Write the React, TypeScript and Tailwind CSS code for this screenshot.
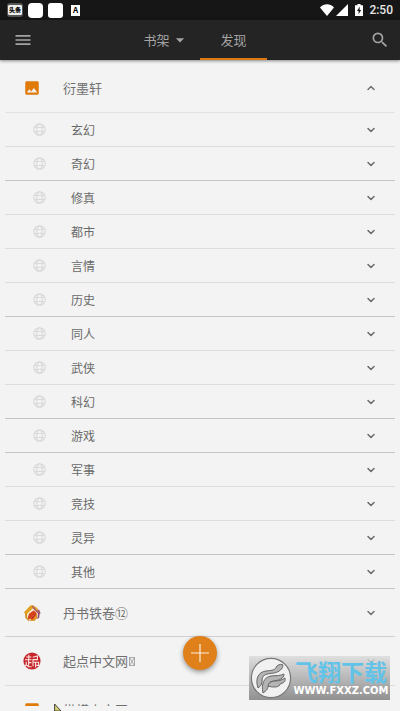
import React from 'react';
import { ChevronDown, ChevronUp } from 'lucide-react';
import { MdImage, MdMenu, MdSearch, MdArrowDropDown } from 'react-icons/md';

// `strong` marks the rows with the darker lower divider
const categories = [
  { name: '玄幻', strong: false },
  { name: '奇幻', strong: true },
  { name: '修真', strong: false },
  { name: '都市', strong: false },
  { name: '言情', strong: false },
  { name: '历史', strong: true },
  { name: '同人', strong: false },
  { name: '武侠', strong: false },
  { name: '科幻', strong: true },
  { name: '游戏', strong: true },
  { name: '军事', strong: false },
  { name: '竞技', strong: false },
  { name: '灵异', strong: true },
  { name: '其他', strong: true },
];

const Globe = () => (
  <svg className="size-[13px] shrink-0" viewBox="0 0 13 13" fill="none" stroke="#dadada" strokeWidth="1.2">
    <circle cx="6.5" cy="6.5" r="5.7" />
    <ellipse cx="6.5" cy="6.5" rx="2.7" ry="5.7" />
    <path d="M1.2 4.5h10.6M1.2 8.5h10.6" />
  </svg>
);

const HouseIcon = () => (
  <svg className="size-[18px]" viewBox="0 0 18 18">
    <path d="M3.4 8.4 9 3.6l5.6 4.8v5.4L11.4 17H6.2l-2.8-2.6z" fill="#f8ecc9" />
    <path d="M.8 8.6 7.6 1.2h2.2l1.6 1.6-6.8 6.4-1.4 1.2z" fill="#dfa01f" />
    <path d="m9.8 1.2 6.8 5.4 1 3-1.8.8-6.6-6.6z" fill="#a65a6e" />
    <path d="m10 2.6 2.8.2 2.6 3.4-1.2.6z" fill="#e0a02a" />
    <path d="M2 9.6h2v4l2.6 2.6-.8 1L2.4 14z" fill="#d08e1e" />
    <path d="M4.8 13.4 6 9.8l4.4-3.4 2.8 1.8-5 6.4-2.6.8z" fill="#d8431d" />
    <path d="M6.6 16.8 8.6 14l5-5.4.8 5.4-3 3z" fill="#e39426" />
    <path d="m8 14.4 4.6-5.6.8 1.4L9 16z" fill="#c0301c" />
    <path d="m15 9 1.6.8-.4 4-1.8 1.4z" fill="#8e4a72" />
  </svg>
);

const SealIcon = () => (
  <svg className="size-[18px]" viewBox="0 0 18 18">
    <circle cx="9" cy="9" r="8.6" fill="#c4282d" />
    <g fill="none" stroke="#fbe4e1" strokeWidth="1.1">
      <path d="M3.2 5h5.2M5.8 2.8v5M2 7.8h6.6M5.6 7.8v6M5.6 10.6h2.8M3.2 9.8v3.2l-1 1M3.4 13l2.4 1.8h2.8" />
      <path d="M9.8 5.2 14.4 4v3.6H10v6.6M10 10.2h5.6v3.2h-2.2M12.6 10.2v5.2" />
    </g>
  </svg>
);

const PictureIcon = () => <MdImage className="size-[18px] text-[#e07a08]" />;

const Tofu = () => (
  <svg className="ml-px h-[9px] w-[6px]" viewBox="0 0 6 9" fill="none" stroke="#8a8a8a" strokeWidth=".7">
    <path d="M.5.5h5v8h-5zM.5.5l5 8M5.5.5l-5 8" />
  </svg>
);

const StatusBar = () => (
  <div className="flex h-5 shrink-0 items-center bg-[#161616] px-[7px] text-white">
    <span className="flex h-[14px] w-4 items-center justify-center rounded-[3px] border border-y-2 border-[#555] bg-[#efefef] text-[6px] leading-none font-black text-black">头条</span>
    <span className="ml-[5px] size-[15px] rounded-[4px] bg-white" />
    <span className="ml-[5px] size-[15px] rounded-[3px] bg-white" />
    <span className="ml-2 flex h-[11px] w-[9px] items-center justify-center bg-white text-[8px] leading-none font-bold text-black">A</span>
    <div className="ml-auto flex items-center">
      {/* wifi, cell signal, charging battery */}
      <svg className="h-3 w-[14px]" viewBox="0 0 14 12" fill="#fff">
        <path d="M0 3.4C4-.8 10-.8 14 3.4L7 12z" />
      </svg>
      <svg className="ml-0.5 h-3 w-[12px]" viewBox="0 0 12 12" fill="#fff">
        <path d="M12 0v12H0z" />
      </svg>
      <svg className="ml-[7px] h-3 w-2" viewBox="0 0 8 12">
        <path d="M2.4 0h3.2v1.2H8V12H0V1.2h2.4z" fill="#fff" />
        <path d="M4.8 2.6 2 7h1.6v3.2L6.2 6H4.6z" fill="#161616" />
      </svg>
      <span className="ml-[6px] font-['Roboto',sans-serif] text-[12px] leading-none font-medium text-[#e6e6e6]">2:50</span>
    </div>
  </div>
);

const Toolbar = () => (
  <header className="relative z-10 flex h-10 shrink-0 items-center justify-between bg-[#242424] text-[#a3a3a3] shadow-[0_1px_3px_rgba(0,0,0,0.45)]">
    <button type="button" aria-label="菜单" className="w-10 pl-[13px]">
      <MdMenu className="size-5" />
    </button>
    <nav className="flex h-full text-[13px]">
      <button type="button" className="flex w-[67px] items-center justify-center">
        书架
        <MdArrowDropDown className="size-5" />
      </button>
      <button type="button" className="w-[67px] border-b-2 border-[#d9790f] pt-0.5">发现</button>
    </nav>
    <button type="button" aria-label="搜索" className="flex w-10 justify-end pr-[10px]">
      <MdSearch className="size-5" />
    </button>
  </header>
);

interface SourceProps {
  icon: React.ReactNode;
  title: React.ReactNode;
  open?: boolean;
  className: string;
}

const Source: React.FC<SourceProps> = ({ icon, title, open, className }) => (
  <button type="button" aria-expanded={!!open} className={`flex w-full shrink-0 items-center border-b pr-[18px] pl-[18px] text-[13px] text-[#707070] ${className}`}>
    {icon}
    <span className="ml-[22px] flex items-center">{title}</span>
    {open ? <ChevronUp className="ml-auto size-3" strokeWidth={3} /> : <ChevronDown className="ml-auto size-3" strokeWidth={3} />}
  </button>
);

const Watermark = () => (
  <div className="absolute right-[10px] bottom-[11px] flex h-11 w-[141px] items-center bg-linear-to-b from-[#dadada]/80 to-[#8c8c8c]/95">
    <svg className="ml-px size-[42px] shrink-0" viewBox="0 0 42 42">
      <circle cx="21" cy="21" r="19.6" fill="#f1f1f1" stroke="#777" strokeWidth="1.2" />
      <g fill="#b4b4b4" stroke="#666" strokeWidth="1">
        <path d="M8 31C5 22 8 15 16 14c7-.6 9-1 11-5 2-2 5-2 6-1 0 4-4 7-9 8-9 1-12 2-12 8 0 3-1 5-4 7z" />
        <path d="M13 36c-2-9 1-16 8-17 6-.6 9 0 13-2 0 5-5 6-10 7-5 .6-5 2-6 6 0 2-2 4-5 6z" />
        <path d="M18 29c1-4 4-5 8-5 4-.4 6-1 9-3 1 4-2 5-5 6 0 3-6 4-12 2z" />
      </g>
    </svg>
    <div className="flex flex-1 flex-col items-center">
      <span className="text-[23px] leading-6 font-bold text-[#62c3e8]">飞翔下载</span>
      <span className="mt-0.5 font-['DejaVu_Sans',sans-serif] text-[10px] leading-3 font-bold text-white">WWW.FXXZ.COM</span>
    </div>
  </div>
);

export default function App() {
  return (
    <div className="relative flex h-screen flex-col overflow-hidden bg-[#f3f3f3] pb-[5px] font-['Noto_Sans_CJK_SC',sans-serif]">
      <StatusBar />
      <Toolbar />
      <main className="flex min-h-0 flex-1 flex-col overflow-hidden px-[5px]">
        <Source className="h-[53px] border-[#e2e2e2] pt-1" icon={<PictureIcon />} title="衍墨轩" open />
        {categories.map((category) => (
          <button
            key={category.name}
            type="button"
            className={`flex h-[34px] w-full shrink-0 items-center border-b pr-[18px] pl-7 text-[12px] text-[#6a6a6a] ${category.strong ? 'border-[#c4c4c4]' : 'border-[#dddddd]'}`}
          >
            <Globe />
            <span className="ml-[25px]">{category.name}</span>
            <ChevronDown className="ml-auto size-3" strokeWidth={3} />
          </button>
        ))}
        <Source className="h-12 border-[#d0d0d0]" icon={<HouseIcon />} title="丹书铁卷⑫" />
        <Source className="h-[49px] border-[#dedede]" icon={<SealIcon />} title={<>起点中文网<Tofu /></>} />
        <Source className="h-[49px] border-[#dedede]" icon={<PictureIcon />} title="纵横中文网" />
      </main>

      {/* Add source */}
      <button type="button" aria-label="添加" className="absolute bottom-[41px] left-1/2 z-10 flex size-[34px] -translate-x-1/2 items-center justify-center rounded-full bg-[#e0801a] shadow-[0_2px_5px_rgba(0,0,0,0.4)]">
        <svg className="size-[18px]" viewBox="0 0 18 18" stroke="#fbeedd" strokeWidth="1.2">
          <path d="M9 0v18M0 9h18" />
        </svg>
      </button>

      <Watermark />

      {/* Pointer */}
      <svg className="absolute bottom-0 left-[54px] h-[7px] w-2" viewBox="0 0 8 7">
        <path d="M.6 0v7H7z" fill="#d8cf72" stroke="#333" strokeWidth=".9" />
      </svg>
    </div>
  );
}
